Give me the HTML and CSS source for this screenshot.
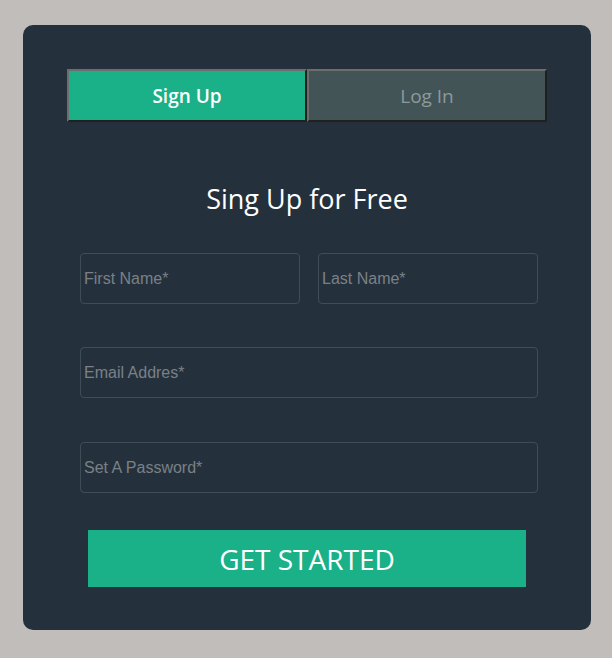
FILE: index.html
```html
<!DOCTYPE html>
<html lang="en">
<head>
<meta charset="utf-8">
<title>Sign Up</title>
<link rel="stylesheet" href="styles.css">
</head>
<body>
<div class="card">
  <div class="tabs">
    <div class="tab tab-active">Sign Up</div>
    <div class="tab tab-idle">Log In</div>
  </div>
  <h1 class="title">Sing Up for Free</h1>
  <form class="form">
    <div class="row row-split">
      <input class="field" type="text" placeholder="First Name*">
      <input class="field" type="text" placeholder="Last Name*">
    </div>
    <div class="row row-email">
      <input class="field" type="email" placeholder="Email Addres*">
    </div>
    <div class="row row-pass">
      <input class="field" type="password" placeholder="Set A Password*">
    </div>
  </form>
  <button class="cta" type="button">GET STARTED</button>
</div>
</body>
</html>
```
FILE: styles.css
```css
html, body {
  margin: 0;
  padding: 0;
  background: #c1bdba;
}
body {
  padding: 25px 21px 28px 23px;
  font-family: "Open Sans", "DejaVu Sans", sans-serif;
}
.card {
  width: 568px;
  box-sizing: border-box;
  background: #24313d;
  border-radius: 10px;
  padding: 44px 44px 43px 44px;
}
.tabs {
  display: flex;
}
.tab {
  width: 240px;
  height: 53px;
  box-sizing: border-box;
  border: 2px solid;
  border-color: #6d6d6d #202020 #202020 #6d6d6d;
  display: flex;
  align-items: center;
  justify-content: center;
  font-size: 19px;
}
.tab-active {
  background: #1ab188;
  color: #ffffff;
  font-weight: 600;
}
.tab-idle {
  background: #435457;
  color: #8b9a9b;
}
.title {
  margin: 57px 0 34px 0;
  height: 40px;
  line-height: 40px;
  text-align: center;
  color: #ffffff;
  font-weight: 400;
  font-size: 27px;
}
.form {
  margin: 0 9px 0 13px;
  display: flex;
  flex-direction: column;
}
.row {
  display: flex;
}
.row-split {
  gap: 18px;
}
.row-email {
  margin-top: 43px;
}
.row-pass {
  margin-top: 44px;
}
.field {
  flex: 1;
  min-width: 0;
  height: 51px;
  box-sizing: border-box;
  margin: 0;
  padding: 0 3px;
  background: transparent;
  border: 1px solid #3f4d59;
  border-radius: 4px;
  color: #ffffff;
  font-family: "Liberation Sans", Arial, sans-serif;
  font-size: 16px;
  outline: none;
}
.field::placeholder {
  color: #7b8086;
}
.cta {
  display: block;
  width: 438px;
  height: 57px;
  margin: 37px 21px 0 21px;
  border: none;
  background: #1ab188;
  color: #ffffff;
  font-family: "Open Sans", "DejaVu Sans", sans-serif;
  font-size: 28px;
  padding: 0;
}
```
